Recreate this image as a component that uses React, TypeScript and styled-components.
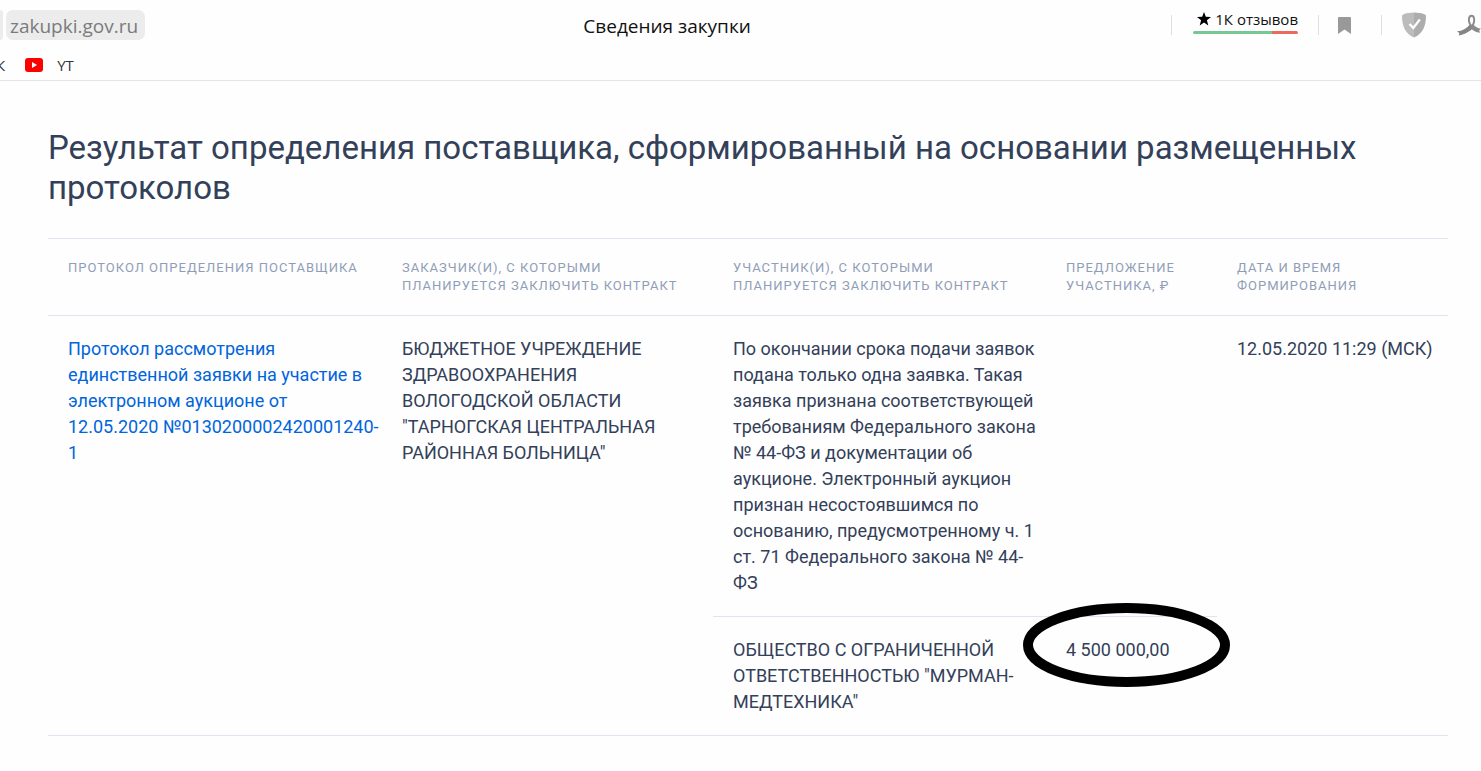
import React from "react";
import styled, { createGlobalStyle } from "styled-components";

const GlobalStyle = createGlobalStyle`
  * { box-sizing: border-box; }
  body {
    margin: 0;
    background: #fefefe;
    color: #334059;
    font-family: Roboto, "Liberation Sans", sans-serif;
    overflow-x: hidden;
  }
`;

const Chrome = styled.header`
  border-bottom: 1px solid #e4e4e4;
  font-family: "Open Sans", "Noto Sans", sans-serif;
  overflow: hidden;
`;

const Toolbar = styled.div`
  display: flex;
  align-items: center;
  height: 50px;
`;

const ChipEdge = styled.span`
  width: 3px;
  height: 30px;
  margin-right: 3px;
  border-radius: 0 6px 6px 0;
  background: #ececec;
`;

const Address = styled.a`
  height: 30px;
  padding: 0 7px 0 4px;
  border-radius: 7px;
  background: #ececec;
  color: #7b7b7b;
  font-size: 19px;
  line-height: 32px;
  text-decoration: none;
`;

const PageTitle = styled.span`
  flex: 1;
  padding: 2px 0 0 18px;
  color: #111;
  font-size: 19px;
  line-height: 24px;
  text-align: center;
  white-space: nowrap;
`;

const Divider = styled.span`
  width: 1px;
  height: 20px;
  background: #dedede;
`;

const Reviews = styled.button`
  display: flex;
  flex-direction: column;
  justify-content: space-between;
  width: 105px;
  height: 24px;
  margin: 0 20px 6px 21px;
  padding: 0;
  border: 0;
  background: none;
  color: #111;
  font: 15px/20px "Open Sans", "Noto Sans", sans-serif;
  cursor: pointer;
`;

const ReviewsLabel = styled.span`
  display: flex;
  align-items: center;
  justify-content: flex-end;
  gap: 4px;
  width: 100%;
  height: 18px;
  white-space: nowrap;
`;

const RatingBar = styled.span`
  display: flex;
  width: 100%;
  height: 3px;
  border-radius: 2px;
  overflow: hidden;
`;

const RatingPart = styled.span<{ $share: number; $color: string }>`
  flex: ${(p) => p.$share};
  background: ${(p) => p.$color};
`;

const IconButton = styled.button<{ $left: number; $right: number }>`
  display: flex;
  flex: none;
  margin: 0 ${(p) => p.$right}px 0 ${(p) => p.$left}px;
  padding: 0;
  border: 0;
  background: none;
  cursor: pointer;
`;

const Bookmarks = styled.nav`
  display: flex;
  align-items: center;
  height: 30px;
`;

const Bookmark = styled.a<{ $clipped?: boolean }>`
  display: flex;
  align-items: center;
  gap: 14px;
  margin-left: ${(p) => (p.$clipped ? "-4px" : "20px")};
  color: #333;
  font-size: 15px;
  line-height: 20px;
  text-decoration: none;
`;

const Content = styled.main`
  padding: 47px 33px 32px 48px;
`;

const Heading = styled.h1`
  margin: 0 0 30px;
  font-size: 33px;
  font-weight: 400;
  line-height: 40px;
`;

const Table = styled.table`
  width: 100%;
  table-layout: fixed;
  border-collapse: separate;
  border-spacing: 0;
  border-top: 1px solid #e3e3f1;
`;

const Column = styled.col<{ $width: number }>`
  width: ${(p) => p.$width}px;
`;

const HeadCell = styled.th`
  padding: 20px;
  border-bottom: 1px solid #e3e3f1;
  color: #909db8;
  font-size: 13px;
  font-weight: 400;
  line-height: 18px;
  letter-spacing: 1px;
  text-align: left;
  text-transform: uppercase;
  vertical-align: top;
`;

const Cell = styled.td`
  padding: 20px 0 20px 20px;
  border-bottom: 1px solid #e3e3f1;
  font-size: 18px;
  line-height: 26px;
  text-align: left;
  vertical-align: top;
`;

const Line = styled.span`
  display: block;
  white-space: nowrap;
`;

const ProtocolLink = styled.a`
  color: #0065dc;
  text-decoration: none;
`;

const Marked = styled.span`
  position: relative;
  white-space: nowrap;
`;

const MarkRing = styled.svg`
  position: absolute;
  top: -36px;
  left: -43px;
  width: 207px;
  height: 84px;
  pointer-events: none;
`;

const headings = [
  "Протокол определения поставщика",
  "Заказчик(и), с которыми планируется заключить контракт",
  "Участник(и), с которыми планируется заключить контракт",
  "Предложение участника, ₽",
  "Дата и время формирования",
];

const columnWidths = [334, 331, 333, 171, 231];

const protocol = [
  "Протокол рассмотрения",
  "единственной заявки на участие в",
  "электронном аукционе от",
  "12.05.2020 №0130200002420001240-",
  "1",
];

const customer = [
  "БЮДЖЕТНОЕ УЧРЕЖДЕНИЕ",
  "ЗДРАВООХРАНЕНИЯ",
  "ВОЛОГОДСКОЙ ОБЛАСТИ",
  '"ТАРНОГСКАЯ ЦЕНТРАЛЬНАЯ',
  'РАЙОННАЯ БОЛЬНИЦА"',
];

const resolution = [
  "По окончании срока подачи заявок",
  "подана только одна заявка. Такая",
  "заявка признана соответствующей",
  "требованиям Федерального закона",
  "№ 44-ФЗ и документации об",
  "аукционе. Электронный аукцион",
  "признан несостоявшимся по",
  "основанию, предусмотренному ч. 1",
  "ст. 71 Федерального закона № 44-",
  "ФЗ",
];

const supplier = ["ОБЩЕСТВО С ОГРАНИЧЕННОЙ", 'ОТВЕТСТВЕННОСТЬЮ "МУРМАН-', 'МЕДТЕХНИКА"'];

const Lines = ({ of }: { of: string[] }) => (
  <>
    {of.map((text) => (
      <Line key={text}>{text}</Line>
    ))}
  </>
);

const StarIcon = () => (
  <svg width="14" height="14" viewBox="0 0 14 14" aria-hidden="true">
    <path d="M7 0l1.8 4.8 5.2.2-4.1 3.2L11.3 13.4 7 10.4l-4.3 3 1.4-5.2L0 5l5.2-.2z" fill="#000" />
  </svg>
);

const BookmarkIcon = () => (
  <svg width="13" height="17" viewBox="0 0 13 17" aria-hidden="true">
    <path d="M0 1q0-1 1-1h11q1 0 1 1v16l-6.500-4.500L0 17z" fill="#999" />
  </svg>
);

const ShieldIcon = () => (
  <svg width="24" height="26" viewBox="0 0 24 26" aria-hidden="true">
    <path d="M12 .5C8 .6 4 1.200 1.200 2.400.4 2.700 0 3.200 0 4c0 10 3.400 18 12 21.500z" fill="#bcbcbc" />
    <path d="M12 .5c4 .1 8 .7 10.800 1.900.8.3 1.200.8 1.200 1.600 0 10-3.400 18-12 21.500z" fill="#adadad" />
    <path d="M7.500 12l3.800 4 6.500-8.500" fill="none" stroke="#fff" strokeWidth="2.200" />
  </svg>
);

const RibbonIcon = () => (
  <svg width="24" height="22" viewBox="0 0 24 22" aria-hidden="true">
    <path
      d="M13.500 13.500C16.500 11 17.400 8 17.200 5.200 17 2.900 16 1.700 14.600 1.700s-2.500 1.200-2.700 3.500c-.2 2.800 1 5.800 4.100 8.300"
      fill="none"
      stroke="#8b8b8b"
      strokeWidth="1.900"
    />
    <path d="M12.800 10.500l3.400 3.200C12.500 17.500 8.500 20.300 1.800 21.400l.5-2.400L0 17.300c5.500-.3 9.600-2.600 12.800-6.800z" fill="#858585" />
    <path d="M16.200 10.300c2 2.500 4.400 4.100 7.800 4.300l-1.800 1.700.8 2.500c-3.800-.4-7.200-2-9.600-5z" fill="#8b8b8b" />
  </svg>
);

const VideoIcon = () => (
  <svg width="18" height="14" viewBox="0 0 18 14" aria-hidden="true">
    <rect width="18" height="14" rx="3" fill="#f00" />
    <path d="M7 4l5 3-5 3z" fill="#fff" />
  </svg>
);

export default function App() {
  return (
    <>
      <GlobalStyle />
      <Chrome>
        <Toolbar>
          <ChipEdge />
          <Address href="#">zakupki.gov.ru</Address>
          <PageTitle>Сведения закупки</PageTitle>
          <Divider />
          <Reviews type="button">
            <ReviewsLabel>
              <StarIcon />
              1К отзывов
            </ReviewsLabel>
            <RatingBar>
              <RatingPart $share={3} $color="#76c893" />
              <RatingPart $share={1} $color="#ec6a5c" />
            </RatingBar>
          </Reviews>
          <Divider />
          <IconButton type="button" aria-label="Закладка" $left={19} $right={30}>
            <BookmarkIcon />
          </IconButton>
          <Divider />
          <IconButton type="button" aria-label="Защита" $left={20} $right={31}>
            <ShieldIcon />
          </IconButton>
          <IconButton type="button" aria-label="Лента" $left={0} $right={0}>
            <RibbonIcon />
          </IconButton>
        </Toolbar>
        <Bookmarks>
          <Bookmark href="#" $clipped>
            К
          </Bookmark>
          <Bookmark href="#">
            <VideoIcon />
            YT
          </Bookmark>
        </Bookmarks>
      </Chrome>
      <Content>
        <Heading>Результат определения поставщика, сформированный на основании размещенных протоколов</Heading>
        <Table>
          <colgroup>
            {columnWidths.map((width, i) => (
              <Column key={i} $width={width} />
            ))}
          </colgroup>
          <thead>
            <tr>
              {headings.map((text) => (
                <HeadCell key={text} scope="col">
                  {text}
                </HeadCell>
              ))}
            </tr>
          </thead>
          <tbody>
            <tr>
              <Cell rowSpan={2}>
                <ProtocolLink href="#">
                  <Lines of={protocol} />
                </ProtocolLink>
              </Cell>
              <Cell rowSpan={2}>
                <Lines of={customer} />
              </Cell>
              <Cell>
                <Lines of={resolution} />
              </Cell>
              <Cell />
              <Cell rowSpan={2}>
                <Line>12.05.2020 11:29 (МСК)</Line>
              </Cell>
            </tr>
            <tr>
              <Cell>
                <Lines of={supplier} />
              </Cell>
              <Cell>
                <Marked>
                  4 500 000,00
                  <MarkRing viewBox="0 0 207 84" aria-hidden="true">
                    <ellipse cx="103.500" cy="42" rx="98.500" ry="37" fill="none" stroke="#000" strokeWidth="10" />
                  </MarkRing>
                </Marked>
              </Cell>
            </tr>
          </tbody>
        </Table>
      </Content>
    </>
  );
}
